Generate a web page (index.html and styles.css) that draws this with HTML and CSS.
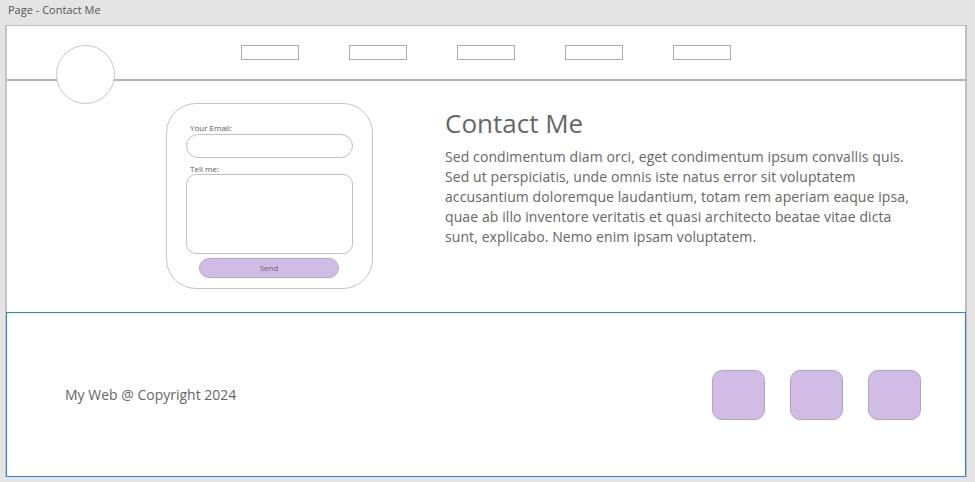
FILE: index.html
```html
<!DOCTYPE html>
<html>
<head>
<meta charset="utf-8">
<link rel="stylesheet" href="styles.css">
</head>
<body>
<div class="titlebar">Page - Contact Me</div>
<div class="page">
  <header class="header">
    <div class="logo"></div>
    <nav class="nav">
      <span class="nav-item"></span>
      <span class="nav-item"></span>
      <span class="nav-item"></span>
      <span class="nav-item"></span>
      <span class="nav-item"></span>
    </nav>
  </header>
  <main class="main">
    <form class="card">
      <label class="label">Your Email:</label>
      <div class="input"></div>
      <label class="label label-2">Tell me:</label>
      <div class="textarea"></div>
      <div class="send">Send</div>
    </form>
    <section class="content">
      <h1 class="heading">Contact Me</h1>
      <p class="text">Sed condimentum diam orci, eget condimentum ipsum convallis quis. Sed ut perspiciatis, unde omnis iste natus error sit voluptatem accusantium doloremque laudantium, totam rem aperiam eaque ipsa, quae ab illo inventore veritatis et quasi architecto beatae vitae dicta sunt, explicabo. Nemo enim ipsam voluptatem.</p>
    </section>
  </main>
  <footer class="footer">
    <div class="copy">My Web @ Copyright 2024</div>
    <div class="socials">
      <span class="social"></span>
      <span class="social"></span>
      <span class="social"></span>
    </div>
  </footer>
</div>
</body>
</html>
```
FILE: styles.css
```css
* { box-sizing: border-box; }
html, body { margin: 0; padding: 0; }
body {
  background: #e4e4e4;
  font-family: "Open Sans", "Noto Sans", sans-serif;
  color: #666;
  width: 975px;
  height: 482px;
  overflow: hidden;
}
.titlebar {
  height: 25px;
  padding: 3px 0 0 8px;
  font-size: 11px;
  color: #555;
  line-height: 14px;
}
.page {
  margin-left: 5px;
  width: 962px;
  background: #fff;
  border-top: 1px solid #b9b9b9;
  border-left: 2px solid #c4c4c4;
  border-right: 2px solid #bdbdbd;
}
.header {
  position: relative;
  height: 55px;
  border-bottom: 2px solid #b3b3b3;
}
.logo {
  position: absolute;
  left: 49px;
  top: 19px;
  width: 59px;
  height: 59px;
  border-radius: 50%;
  border: 1px solid #c6c6c6;
  background: #fff;
  z-index: 2;
}
.nav {
  display: flex;
  gap: 50px;
  padding: 19px 0 0 234px;
}
.nav-item {
  width: 58px;
  height: 15px;
  border: 1px solid #ababab;
}
.main {
  display: flex;
  height: 231px;
  padding: 22px 0 0 159px;
}
.card {
  margin: 0;
  width: 207px;
  height: 186px;
  border: 1px solid #c4c4c4;
  border-radius: 30px;
  padding: 19px 19px 0 19px;
  display: flex;
  flex-direction: column;
}
.label {
  font-size: 8px;
  line-height: 10px;
  color: #555;
  padding-left: 4px;
  height: 11px;
}
.label-2 { margin-top: 6px; height: 10px; }
.input {
  width: 167px;
  height: 24px;
  border: 1px solid #c0c0c0;
  border-radius: 12px;
}
.textarea {
  width: 167px;
  height: 80px;
  border: 1px solid #c0c0c0;
  border-radius: 10px;
}
.send {
  margin: 4px 0 0 13px;
  width: 140px;
  height: 20px;
  background: #d1bce5;
  border: 1px solid #b8a8c8;
  border-radius: 10px;
  font-size: 8px;
  line-height: 18px;
  text-align: center;
  color: #666;
}
.content {
  margin-left: 72px;
  width: 475px;
}
.heading {
  margin: 4px 0 0 0;
  font-weight: 400;
  font-size: 26px;
  line-height: 32px;
  color: #666;
}
.text {
  margin: 8px 0 0 0;
  font-size: 14px;
  line-height: 20px;
  letter-spacing: 0.09px;
  color: #666;
}
.footer {
  height: 165px;
  border: 1px solid #2583f0;
  margin-left: -1px;
  margin-right: -1px;
  display: flex;
  align-items: center;
  justify-content: space-between;
  padding: 0 44px 0 58px;
}
.copy {
  font-size: 14px;
  line-height: 20px;
  color: #666;
  margin-top: 1px;
}
.socials {
  display: flex;
  gap: 25px;
  margin-top: 1px;
}
.social {
  width: 53px;
  height: 50px;
  background: #d1bce5;
  border: 1px solid #b4a4c4;
  border-radius: 10px;
}
```
